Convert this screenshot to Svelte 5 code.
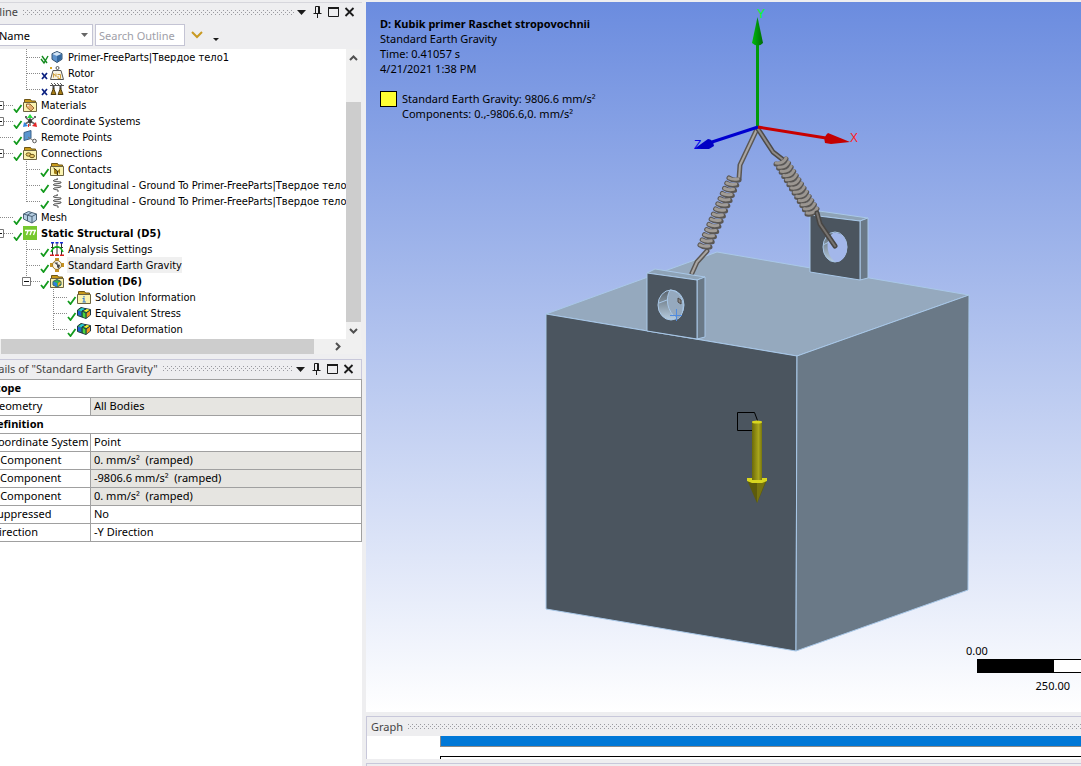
<script>
    let scheme = $state('Name');
    let search = $state('');

    // d = depth, mark = state glyph, exp = expander box, last = guide stops at this row
    const tree = [
        { label: 'Primer-FreeParts|Твердое тело1', icon: 'body', d: 1, mark: 'hidden' },
        { label: 'Rotor', icon: 'mass', d: 1, mark: 'x' },
        { label: 'Stator', icon: 'stator', d: 1, mark: 'x', last: true },
        { label: 'Materials', icon: 'materials', d: 0, exp: true },
        { label: 'Coordinate Systems', icon: 'axes', d: 0, exp: true },
        { label: 'Remote Points', icon: 'remote', d: 0 },
        { label: 'Connections', icon: 'connections', d: 0, exp: true },
        { label: 'Contacts', icon: 'contacts', d: 1 },
        { label: 'Longitudinal - Ground To Primer-FreeParts|Твердое тело', icon: 'spring', d: 1 },
        { label: 'Longitudinal - Ground To Primer-FreeParts|Твердое тело', icon: 'spring', d: 1, last: true },
        { label: 'Mesh', icon: 'mesh', d: 0 },
        { label: 'Static Structural (D5)', icon: 'static', d: 0, exp: true, bold: true },
        { label: 'Analysis Settings', icon: 'settings', d: 1 },
        { label: 'Standard Earth Gravity', icon: 'gravity', d: 1, selected: true },
        { label: 'Solution (D6)', icon: 'solution', d: 1, exp: true, bold: true, last: true },
        { label: 'Solution Information', icon: 'info', d: 2 },
        { label: 'Equivalent Stress', icon: 'result', d: 2 },
        { label: 'Total Deformation', icon: 'result', d: 2, last: true }
    ];

    const details = [
        { group: 'Scope' },
        { name: 'Geometry', value: 'All Bodies', locked: true },
        { group: 'Definition' },
        { name: 'Coordinate System', value: 'Point' },
        { name: 'X Component', value: '0. mm/s²  (ramped)', locked: true },
        { name: 'Y Component', value: '-9806.6 mm/s²  (ramped)', locked: true },
        { name: 'Z Component', value: '0. mm/s²  (ramped)', locked: true },
        { name: 'Suppressed', value: 'No' },
        { name: 'Direction', value: '-Y Direction' }
    ];

    function coils(x1, y1, x2, y2, n) {
        return Array.from({ length: n }, (_, i) => ({
            x: x1 + ((x2 - x1) * i) / (n - 1),
            y: y1 + ((y2 - y1) * i) / (n - 1)
        }));
    }

    const leftCoils = coils(734, 180, 705, 247, 14);
    const rightCoils = coils(781, 162, 812, 212, 13);
</script>

{#snippet panelTitle(text)}
    <header class="panel-title">
        <h2>{text}</h2>
        <svg class="grip" height="5" aria-hidden="true">
            <defs>
                <pattern id="grip-{text.length}" width="4" height="4" patternUnits="userSpaceOnUse">
                    <rect width="1" height="1" fill="#9a9aa0" />
                    <rect x="2" y="2" width="1" height="1" fill="#9a9aa0" />
                </pattern>
            </defs>
            <rect width="100%" height="5" fill="url(#grip-{text.length})" />
        </svg>
    </header>
{/snippet}

{#snippet panelButtons()}
    <div class="panel-buttons">
        <button aria-label="Window menu"><svg width="11" height="12"><path d="M1 4h9L5.5 9z" fill="#1b1b1b" /></svg></button>
        <button aria-label="Auto hide"><svg width="11" height="12"><path d="M3.5 7V.5h4V7M1.5 7.5h8M5.5 7.500V12" fill="none" stroke="#1b1b1b" /><path d="M6 1h1.500v6H6z" fill="#1b1b1b" /></svg></button>
        <button aria-label="Maximize"><svg width="11" height="12"><path d="M.5 2v8.500h10V2" fill="none" stroke="#1b1b1b" /><path d="M0 1h11v2H0z" fill="#1b1b1b" /></svg></button>
        <button aria-label="Close"><svg width="11" height="12"><path d="M1.500 2l8 8M9.500 2l-8 8" stroke="#1b1b1b" stroke-width="1.8" /></svg></button>
    </div>
{/snippet}

{#snippet folder()}
    <path d="M1.500 3V1.500h6l1 1.500h4V5h-11z" fill="#c99a1a" stroke="#6f5616" />
    <path d="M.5 4.500h13v9H.5z" fill="#fbf3b0" stroke="#6d6440" />
{/snippet}

{#snippet icon(name)}
    <svg class="icon" width="14" height="14" viewBox="0 0 14 14" aria-hidden="true">
        {#if name === 'body'}
            <path d="M7 1.500l5 2.200v5.600L7 12.500 2 9.300V3.700z" fill="#5f93cc" stroke="#34526f" />
            <path d="M2.500 4L7 2l4.500 2L7 6z" fill="#d4e5f5" />
            <path d="M7 6v6l4.500-3V4z" fill="#35689e" />
        {:else if name === 'mass'}
            <circle cx="7.500" cy="2" r="1.500" fill="none" stroke="#555" />
            <path d="M3 4.500h8l2.500 9H.5z" fill="#f7f3e6" stroke="#555" />
            <path d="M3.500 11.500v-4l2.500 3v-3M7.500 8.500h3v4H8v-2.500" fill="none" stroke="#d0a03c" />
            <path d="M0 1h2v2H0z" fill="#d9a520" />
        {:else if name === 'stator'}
            <path d="M0 3.500h14M1 1l2 2M4 1l2 2M7 1l2 2M10 1l2 2" stroke="#555" fill="none" />
            <path d="M3.500 4v3M10.500 4v3" stroke="#444" stroke-width="2" />
            <path d="M3.500 6L6 12.500H1zM10.500 6l2.500 6.500H8z" fill="#a87d16" stroke="#4c3b10" />
        {:else if name === 'materials'}
            {@render folder()}
            <path d="M3.500 6h3.500l4 4-3 3-4.500-4z" fill="#e4b071" stroke="#9a6b32" />
            <circle cx="5" cy="7.500" r=".8" fill="#fff" />
        {:else if name === 'axes'}
            <path d="M7 7V2M7 7l4-3M7 7L3 4M7 7v5M7 7L2 10M7 7l5 3" stroke="#666" stroke-width="1.500" fill="none" />
            <path d="M7 0l3 4H4z" fill="#23dd3c" />
            <path d="M0 13l1-5 4 4z" fill="#3588e0" />
            <path d="M14 13L9 12l4-4z" fill="#e62626" />
            <path d="M2 2h2v2H2zM11 2h2v2h-2z" fill="#666" />
            <path d="M5 10h1v3H5z" fill="#e62626" />
            <circle cx="7" cy="7" r="2" fill="#3b3b3b" />
        {:else if name === 'remote'}
            <path d="M1 2.500L8 .5v8l-7 2z" fill="#5a96cf" stroke="#3c628a" />
            <path d="M5 7l6 4" stroke="#777" />
            <circle cx="11.500" cy="11" r="1.800" fill="#fff" stroke="#555" />
        {:else if name === 'connections'}
            {@render folder()}
            <ellipse cx="5.500" cy="8.500" rx="2.500" ry="1.700" fill="#e7c765" stroke="#6f5a1c" />
            <ellipse cx="9" cy="10" rx="2.500" ry="1.700" fill="#e7c765" stroke="#6f5a1c" />
        {:else if name === 'contacts'}
            {@render folder()}
            <path d="M4 6l3 3v3.500l-3-1zM10 6.500v6L7.500 9z" fill="#a07c14" />
            <path d="M3.500 6l4 3v4" stroke="#3c3210" fill="none" />
        {:else if name === 'spring'}
            <path d="M7 0l.5 1.500L4 2q-2 1 1 1.500l6 .5q1 1-2 1.500L4 6q-2 1 1 1.500l6 .5q1 1-2 1.500L4 10q-2 1 1 1.500l3 .5v2" fill="none" stroke="#555" />
        {:else if name === 'mesh'}
            <path d="M.5 4l5-2.500 8 2.500v6L9 13 .5 9z" fill="#b4cde2" stroke="#4b6276" />
            <path d="M.5 4L9 6.500V13M9 6.500L13.500 4M4.500 5v6M4.500 5l4.500-2.500" fill="none" stroke="#4b6276" />
        {:else if name === 'static'}
            <path d="M0 0h14v14H0z" fill="#76c82f" />
            <path d="M2 4.500h11M5 5L3.500 9M8.500 5L7 9M12 5l-1.500 4" fill="none" stroke="#fff" stroke-width="1.300" />
        {:else if name === 'settings'}
            <path d="M2.500 1v12M7 1v12M11.500 1v12M1 5.500h12" stroke="#333" fill="none" />
            <path d="M1 .500h3M5.500 .500h3M10 .500h3" stroke="#1226d8" stroke-width="2" />
            <path d="M0 13.500h4M5 13.500h4M10 13.500h4" stroke="#d91f1f" stroke-width="2" />
            <path d="M1 10C4 3 10 3 13 10" fill="none" stroke="#12b81e" stroke-width="1.500" />
        {:else if name === 'gravity'}
            <path d="M5 0h4v3H5zM5 11h4v3H5zM0 5h3v4H0zM11 5h3v4h-3z" fill="#c79322" />
            <circle cx="7" cy="7" r="4.500" fill="#f7f3e8" stroke="#a37a22" />
            <path d="M7 7L4 4.500h4zM7 6l3 1-1 4-2-2z" fill="#4a4a4a" />
        {:else if name === 'solution'}
            {@render folder()}
            <path d="M3 7.500l4-2 4 2v3.500l-4 2-4-2z" fill="#37b34a" stroke="#356" />
            <path d="M3.500 7.500L7 9v3.500L3.500 11z" fill="#2f7fe0" />
            <path d="M8 9l2.500-1.500v2L8 12z" fill="#f0a41c" />
        {:else if name === 'info'}
            {@render folder()}
            <path d="M7 6v1.500M5.500 8.500H7v3.500M5.500 12h3.500" fill="none" stroke="#3b7fd0" stroke-width="1.200" />
        {:else if name === 'result'}
            <path d="M.5 4L4 1.500l4 1 5.500 1v5.500L9 12.500 .5 9.500z" fill="#2ea84f" stroke="#1d3340" />
            <path d="M1 4.500l3.500 1.500v4L1 9z" fill="#1f62d8" />
            <path d="M2 4l3-2 3 1-3 2.500z" fill="#27c9d8" />
            <path d="M6 5l3 1.500v5.500l-3-1z" fill="#49d53a" />
            <path d="M6.500 4.500L10 3l3 1-3.500 2z" fill="#f5ec2e" />
            <path d="M9.500 7l3.500-2.500V9l-3.500 3z" fill="#f29222" />
            <path d="M5 5v6M5 5l4-2M5 5l4 2v5M9 7l4-3" fill="none" stroke="#1d3340" />
        {/if}
    </svg>
{/snippet}

{#snippet guides(row)}
    {@const x = row.d * 27}
    <svg class="guides" width={47 + x} height="16" viewBox="-24 0 {47 + x} 16" aria-hidden="true">
        {#if row.d === 2}
            <path d="M53.500 0V{row.last ? 9 : 16}" class="dots" />
        {:else if row.d === 1}
            <path d="M26.500 0V{row.last ? 9 : 16}" class="dots" />
        {/if}
        <path d="M{x} 8.500H{x + 14}" class="dots" />
        {#if row.exp}
            <path d="M{x - 4.5} 4.500h8v8h-8z" fill="#fff" stroke="#777" />
            <path d="M{x - 3} 8.500h5" stroke="#111" />
        {/if}
        {#if row.mark === 'x'}
            <path d="M{x + 15} 8l5 6M{x + 20} 8l-5 6" stroke="#0a2080" stroke-width="1.700" />
        {:else if row.mark === 'hidden'}
            <path d="M{x + 14} 10l3 4 4-7M{x + 15} 7l5 7" fill="none" stroke="#118a1c" stroke-width="1.400" />
        {:else}
            <path d="M{x + 14} 12l2.500 3 5-7" fill="none" stroke="#129a1c" stroke-width="1.800" />
        {/if}
    </svg>
{/snippet}

<div class="shell">
    <aside class="side">
        <section class="outline">
            <div class="title-row">
                {@render panelTitle('Outline')}
                {@render panelButtons()}
            </div>

            <div class="toolbar">
                <div class="scheme">
                    <select bind:value={scheme} aria-label="Sort outline by">
                        <option>Name</option>
                    </select>
                    <svg width="7" height="4" aria-hidden="true"><path d="M0 0h7L3.500 4z" fill="#666" /></svg>
                </div>
                <input type="text" placeholder="Search Outline" aria-label="Search Outline" bind:value={search} />
                <button aria-label="Expand search">
                    <svg width="12" height="8"><path d="M1 1l5 5 5-5" fill="none" stroke="#c99a22" stroke-width="2" /></svg>
                </button>
                <button class="more" aria-label="Toolbar options">
                    <svg width="6" height="3"><path d="M0 0h6L3 3z" fill="#1b1b1b" /></svg>
                </button>
            </div>

            <div class="tree-area">
                <ul class="tree">
                    {#each tree as row}
                        <li>
                            {@render guides(row)}
                            {@render icon(row.icon)}
                            <span class="label" class:bold={row.bold} class:selected={row.selected}>{row.label}</span>
                        </li>
                    {/each}
                </ul>
                <div class="vscroll">
                    <button aria-label="Scroll up"><svg width="9" height="6"><path d="M1 5l3.500-3.500L8 5" fill="none" stroke="#505050" stroke-width="2" /></svg></button>
                    <div class="thumb"></div>
                    <button aria-label="Scroll down"><svg width="9" height="6"><path d="M1 1l3.500 3.500L8 1" fill="none" stroke="#505050" stroke-width="2" /></svg></button>
                </div>
            </div>
            <div class="hscroll">
                <div class="thumb"></div>
                <button aria-label="Scroll right"><svg width="6" height="9"><path d="M1 1l3.500 3.500L1 8" fill="none" stroke="#505050" stroke-width="2" /></svg></button>
            </div>
        </section>

        <section class="details">
            <div class="title-row">
                {@render panelTitle('Details of "Standard Earth Gravity"')}
                {@render panelButtons()}
            </div>
            <table>
                <colgroup>
                    <col class="name-col" />
                    <col />
                </colgroup>
                <tbody>
                    {#each details as row}
                        <tr>
                            {#if row.group}
                                <th colspan="2" class="group">{row.group}</th>
                            {:else}
                                <th scope="row">{row.name}</th>
                                <td class:locked={row.locked}>{row.value}</td>
                            {/if}
                        </tr>
                    {/each}
                </tbody>
            </table>
        </section>
    </aside>

    <main>
        <section class="viewport">
            <svg class="scene" viewBox="366 2 715 710" role="img" aria-label="Model geometry">
                <defs>
                    <linearGradient id="shaft">
                        <stop offset="0" stop-color="#6c6a08" />
                        <stop offset=".65" stop-color="#a8a51c" />
                        <stop offset="1" stop-color="#77750d" />
                    </linearGradient>
                    <linearGradient id="bore" x2="0" y2="1">
                        <stop offset="0" stop-color="#59636c" />
                        <stop offset="1" stop-color="#b7cde0" />
                    </linearGradient>
                    <linearGradient id="tip">
                        <stop offset="0" stop-color="#00bb0c" />
                        <stop offset="1" stop-color="#006b06" />
                    </linearGradient>
                </defs>

                <!-- block -->
                <g stroke="#a9c8e8" stroke-linejoin="round">
                    <path d="M546 314L717 252 969 295 797 356z" fill="#95a9be" />
                    <path d="M546 314L797 356 796 651 546 609z" fill="#4b555f" />
                    <path d="M797 356L969 295 968 590 796 651z" fill="#6a7987" />
                </g>

                <!-- rear lug -->
                <g stroke="#a9c8e8" stroke-linejoin="round">
                    <path d="M810 215l9-4 49 7-8 3z" fill="#8ea3b7" />
                    <path d="M860 221l8-3v60l-8 2z" fill="#6a7987" />
                    <path d="M810 215l50 6v59l-50-8z" fill="#4b555f" />
                    <ellipse cx="835" cy="247" rx="12" ry="15" fill="url(#bore)" />
                    <path d="M833 233C844 231 848 243 847 249C846 258 841 262 836 262C827 258 824 240 833 233z" fill="#a3b7ea" stroke="none" />
                    <path d="M823 245l6-3" />
                </g>

                <!-- slings -->
                <g fill="none" stroke-linejoin="round" stroke-linecap="round">
                    <path d="M757 129L740 165 739 179" stroke="#5a5755" stroke-width="5" />
                    <path d="M757 129L740 165 739 179" stroke="#aaa6a2" stroke-width="2" />
                    <path d="M707 251L697 262 692 273" stroke="#5a5755" stroke-width="5" />
                    <path d="M707 251L697 262 692 273" stroke="#aaa6a2" stroke-width="2" />
                    <path d="M758 129L773 152 782 159" stroke="#4c4a49" stroke-width="5" />
                    <path d="M758 129L773 152 782 159" stroke="#8f8b88" stroke-width="2" />
                    {#each leftCoils as c}
                        <path d="M{c.x - 5} {c.y - 2}q4 3 10 2" stroke="#5a5754" stroke-width="5" />
                        <path d="M{c.x - 5} {c.y - 2}q4 2 9 1" stroke="#a19c97" stroke-width="3" />
                    {/each}
                    {#each rightCoils as c}
                        <path d="M{c.x - 5} {c.y + 2}q7 1 10 -5" stroke="#595653" stroke-width="5" />
                        <path d="M{c.x - 5} {c.y + 1}q7 1 10 -5" stroke="#9b9691" stroke-width="3" />
                    {/each}
                    <path d="M817 213L820 224 835 246" stroke="#484644" stroke-width="5" />
                    <path d="M817 213L820 224 835 246" stroke="#77736f" stroke-width="2" />
                </g>

                <!-- front lug -->
                <g stroke="#a9c8e8" stroke-linejoin="round">
                    <path d="M647 273l8-4 50 8-8 3z" fill="#8ea3b7" />
                    <path d="M697 280l8-3v60l-8 2z" fill="#6a7987" />
                    <path d="M647 273l50 7v59l-50-8z" fill="#4b555f" />
                    <ellipse cx="671" cy="305" rx="13" ry="15" fill="url(#bore)" />
                    <path d="M670 290C682 291 684 303 683 309C682 316 679 319 677 319C667 311 665 299 670 290z" fill="#95a9be" />
                    <path d="M659 303l8-3" />
                </g>
                <path d="M678 298l3 2v4l-3-2z" fill="#8b8784" stroke="#4c4a49" />
                <path d="M670 315.500h12M676.500 309v12" stroke="#4f8be0" />

                <!-- triad -->
                <path d="M756 45h3v83h-3z" fill="#009a0a" />
                <path d="M757.500 17L763 43q-5 5-11 0z" fill="url(#tip)" />
                <path d="M758 127L712 142" stroke="#0000d0" stroke-width="3" />
                <path d="M694 149L708 139q5 0 6 7l-5 3z" fill="#0000c4" />
                <path d="M758 127L826 138" stroke="#c80000" stroke-width="3" />
                <path d="M850 142L828 133q-5 4-3 10l6 1z" fill="#c40000" />
                <g class="axis">
                    <text x="757" y="18" fill="#00ff18">Y</text>
                    <text x="850" y="142" fill="#ff2020">X</text>
                    <text x="694" y="149" fill="#0000e8">Z</text>
                </g>

                <!-- gravity arrow -->
                <path d="M737.500 412.500h17l3 8-3 10h-17z" fill="none" stroke="#000" />
                <path d="M752 422h10v58h-10z" fill="url(#shaft)" />
                <ellipse cx="757" cy="422" rx="5" ry="1.500" fill="#d8d61f" />
                <path d="M747 480h20L757 503z" fill="#5d5b0b" />
                <path d="M757 480h9L757 503z" fill="#77740f" />
                <path d="M747 478h5v2h10v-2h5v3l-5 2h-10l-5-2z" fill="#d8d61f" />
            </svg>

            <div class="caption">
                <h1>D: Kubik primer Raschet stropovochnii</h1>
                <p>Standard Earth Gravity</p>
                <p>Time: 0.41057 s</p>
                <p>4/21/2021 1:38 PM</p>
                <div class="legend">
                    <span class="swatch"></span>
                    <div>
                        <p>Standard Earth Gravity: 9806.6 mm/s²</p>
                        <p>Components: 0.,-9806.6,0. mm/s²</p>
                    </div>
                </div>
            </div>

            <div class="scale">
                <span class="zero">0.00</span>
                <div class="bar"></div>
                <span class="quarter">250.00</span>
            </div>
        </section>

        <section class="graph">
            {@render panelTitle('Graph')}
            <div class="plot">
                <div class="range"></div>
                <div class="frame"></div>
            </div>
        </section>
        <div class="next-panel"></div>
    </main>
</div>

<style>
    :global(body) {
        margin: 0;
        overflow: hidden;
    }

    /* the window sits partly past the left edge of the screen */
    .shell {
        display: flex;
        height: 100vh;
        margin-left: -24px;
        padding-top: 2px;
        box-sizing: border-box;
        background: #eeeef0;
        font-family: 'Noto Sans', sans-serif;
        font-size: 11px;
        color: #000;
    }

    h1, h2, p, ul {
        margin: 0;
        padding: 0;
    }

    button {
        display: flex;
        align-items: center;
        justify-content: center;
        padding: 0;
        border: none;
        background: none;
    }

    .side {
        display: flex;
        flex-direction: column;
        flex: 0 0 386px;
        min-width: 0;
        margin-right: 4px;
    }

    .outline {
        border-top: 1px solid #d6d6dc;
    }

    .title-row {
        display: flex;
        align-items: center;
        box-sizing: border-box;
        height: 20px;
        padding-bottom: 2px;
    }

    .panel-title {
        display: flex;
        align-items: center;
        flex: 1;
        gap: 5px;
        height: 19px;
        padding-left: 4px;
    }

    .panel-title h2 {
        font-size: 11px;
        font-weight: 400;
        line-height: 18px;
        color: #444;
        white-space: nowrap;
    }

    .grip {
        flex: 1;
        width: 0;
    }

    .panel-buttons {
        display: flex;
        gap: 5px;
        padding: 0 7px 0 2px;
    }

    .toolbar {
        display: flex;
        align-items: center;
        gap: 2px;
        box-sizing: border-box;
        height: 26px;
        padding-bottom: 2px;
    }

    .toolbar button {
        padding: 0 4px;
    }

    .toolbar .more {
        padding: 8px 4px 0;
    }

    .scheme {
        display: flex;
        align-items: center;
        width: 117px;
    }

    .scheme select {
        flex: 1;
        height: 22px;
        padding: 0 22px;
        border: 1px solid #c4c4d4;
        background: #fff;
        appearance: none;
        font: inherit;
        color: #000;
    }

    .scheme svg {
        margin-left: -12px;
        margin-right: 5px;
    }

    .toolbar input {
        box-sizing: border-box;
        width: 90px;
        height: 22px;
        padding: 0 3px;
        border: 1px solid #c4c4d4;
        background: #fff;
        font: inherit;
    }

    .toolbar input::placeholder {
        color: #a0a0a8;
    }

    .tree-area {
        display: flex;
        height: 290px;
    }

    .tree {
        flex: 1;
        min-width: 0;
        overflow: hidden;
        background: #fff;
        list-style: none;
        font-family: 'DejaVu Sans Condensed', 'DejaVu Sans', sans-serif;
        font-stretch: condensed;
    }

    .tree li {
        display: flex;
        align-items: center;
        height: 16px;
        white-space: nowrap;
    }

    .guides,
    .icon {
        flex: none;
    }

    .dots {
        stroke: #8a8a8a;
        stroke-dasharray: 1 1;
        fill: none;
    }

    .label {
        margin-left: 3px;
        padding: 2px 0 0 1px;
        line-height: 14px;
    }

    .bold {
        font-weight: 700;
    }

    .selected {
        background: #f0f0f0;
    }

    .vscroll {
        display: flex;
        flex-direction: column;
        width: 15px;
        margin-right: 1px;
        background: #f0f0f0;
    }

    .vscroll button {
        height: 17px;
    }

    .vscroll .thumb {
        flex: 1;
        margin-top: 36px;
        background: #cdcdcd;
    }

    .hscroll {
        display: flex;
        height: 15px;
        padding-left: 25px;
        background: #f0f0f0;
    }

    .hscroll .thumb {
        flex: 1;
        background: #cdcdcd;
    }

    .hscroll button {
        width: 48px;
    }

    .details {
        flex: 1;
        margin-top: 5px;
        border-top: 1px solid #c8c8da;
        background: #fff;
    }

    .details .title-row {
        height: 19px;
        border-right: 1px solid #c8c8da;
        background: #eeeef0;
    }

    table {
        width: 100%;
        border-collapse: collapse;
        table-layout: fixed;
    }

    .name-col {
        width: 114px;
    }

    th,
    td {
        box-sizing: border-box;
        height: 18px;
        padding: 0 3px 2px;
        border: 1px solid #a0a0a0;
        line-height: 15px;
        text-align: left;
        white-space: pre;
    }

    th {
        padding-left: 14px;
        font-weight: 400;
    }

    .group {
        padding-left: 12px;
        font-weight: 700;
    }

    .locked {
        background: #e6e5e1;
    }

    main {
        display: flex;
        flex-direction: column;
        flex: 1;
        min-width: 0;
    }

    .viewport {
        position: relative;
        display: flex;
        flex-direction: column;
        justify-content: space-between;
        flex: 1;
        min-height: 0;
        overflow: hidden;
        background: linear-gradient(#6b8cdf, #fff);
    }

    .scene {
        position: absolute;
        inset: 0;
        width: 100%;
        height: 100%;
    }

    .axis {
        font-family: 'Liberation Sans', sans-serif;
        font-size: 12px;
    }

    .caption {
        position: relative;
        padding: 14px;
        line-height: 15px;
    }

    .caption h1 {
        font-size: 11px;
        line-height: 15px;
    }

    .legend {
        display: flex;
        gap: 5px;
        margin-top: 15px;
    }

    .swatch {
        box-sizing: border-box;
        width: 17px;
        height: 16px;
        border: 1px solid #000;
        background: #ffff32;
    }

    .scale {
        position: relative;
        display: flex;
        flex-direction: column;
        align-self: flex-end;
        width: 104px;
        padding-bottom: 18px;
        line-height: 16px;
    }

    .zero {
        margin-left: -11px;
    }

    .scale .bar {
        height: 12px;
        border: solid #000;
        border-width: 1px 0;
        background: linear-gradient(90deg, #000 77px, #fff 77px);
    }

    .quarter {
        padding: 5px 11px 0 0;
        text-align: right;
    }

    .graph {
        margin-top: 4px;
        border-top: 1px solid #c8c8da;
        border-left: 1px solid #c8c8da;
    }

    .plot {
        height: 23px;
        padding-left: 73px;
        background: #fff;
    }

    .range {
        height: 10px;
        border-bottom: 1px solid #888;
        border-left: 1px solid #888;
        background: #0078d7;
    }

    .frame {
        height: 2px;
        margin-top: 9px;
        border-top: 1px solid #000;
        border-left: 1px solid #000;
    }

    .next-panel {
        height: 2px;
        margin-top: 4px;
        border-top: 1px solid #c8c8da;
        border-left: 1px solid #c8c8da;
    }
</style>
